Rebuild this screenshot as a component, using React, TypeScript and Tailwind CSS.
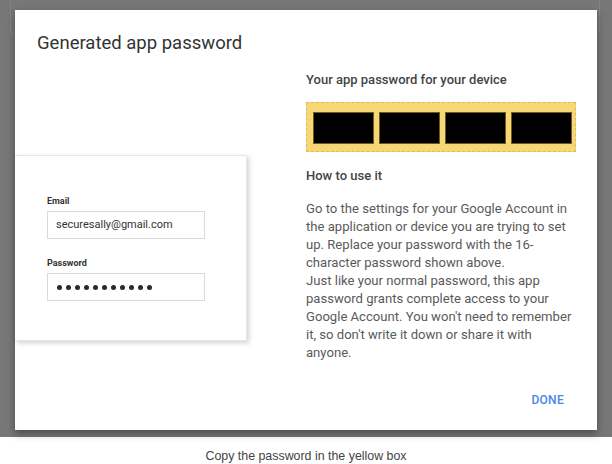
import React from "react";

const Field = ({ label, children }: { label: string; children: React.ReactNode }) => (
  <div className="flex flex-col">
    <div className="text-[9px] leading-[12px] font-bold text-[#333]">{label}</div>
    <div className="mt-[4px] w-[158px] h-[28px] border border-[#d9d9d9] flex items-center pl-[8px]">
      {children}
    </div>
  </div>
);

const App = () => {
  const dots = Array.from({ length: 11 });

  return (
    <div className="w-[612px] h-[464px] bg-white overflow-hidden" style={{ fontFamily: "Roboto, 'Liberation Sans', sans-serif" }}>
      {/* dimmed backdrop */}
      <div className="relative h-[437px] bg-[#777777] pt-[10px] px-[15px]">
        <div className="absolute left-[10px] top-[-6px] w-[590px] h-[42px] rounded-[6px] border border-[#848484]" />
        <div className="relative w-[582px] h-[420px] bg-white shadow-[0_4px_8px_rgba(0,0,0,0.35)] flex flex-col">
          <div className="pl-[22px] pt-[21px] text-[18.5px] leading-[24px] text-[#333]">Generated app password</div>

          <div className="flex flex-1">
            {/* left: login card preview */}
            <div className="w-[291px] shrink-0">
              <div className="mt-[100px] w-[232px] h-[186px] bg-white border border-l-0 border-[#e6e6e6] shadow-[2px_2px_5px_rgba(0,0,0,0.18)] pl-[32px] pt-[39px]">
                <Field label="Email">
                  <span className="text-[11px] text-[#333]">securesally@gmail.com</span>
                </Field>
                <div className="h-[18px]" />
                <Field label="Password">
                  <div className="flex gap-[4px] pl-[1px]">
                    {dots.map((_, i) => (
                      <span key={i} className="w-[5px] h-[5px] rounded-full bg-[#2a2a2a]" />
                    ))}
                  </div>
                </Field>
              </div>
            </div>

            {/* right: password + instructions */}
            <div className="w-[274px] pt-[16px]">
              <div className="text-[13px] leading-[18px] font-medium text-[#444]">Your app password for your device</div>
              <div className="mt-[12.5px] w-[270px] h-[50px] bg-[#f6d675] border border-dashed border-[#e0bd55] grid grid-cols-4 gap-[5px] pl-[6px] pr-[3px] pt-[9px] pb-[7px]">
                <div className="bg-black border border-[#6e5c22]" />
                <div className="bg-black border border-[#6e5c22]" />
                <div className="bg-black border border-[#6e5c22]" />
                <div className="bg-black border border-[#6e5c22]" />
              </div>
              <div className="mt-[15.5px] text-[13px] leading-[18px] font-medium text-[#444]">How to use it</div>
              <p className="mt-[15px] text-[13.1px] leading-[18px] text-[#5a5a5a]">
                Go to the settings for your Google Account in the application or device you are trying to set up. Replace your password with the 16-character password shown above.
                <br />
                Just like your normal password, this app password grants complete access to your Google Account. You won't need to remember it, so don't write it down or share it with anyone.
              </p>
            </div>
          </div>

          <div className="flex justify-end pr-[33px] pb-[22px]">
            <span className="text-[12px] leading-[16px] font-medium text-[#4a86e8] tracking-[0.3px]">DONE</span>
          </div>
        </div>
      </div>

      <div className="pt-[11px] text-center text-[12.4px] leading-[16px] text-[#444]" style={{ fontFamily: "'Liberation Sans', Roboto, sans-serif" }}>
        Copy the password in the yellow box
      </div>
    </div>
  );
};

export default App;
